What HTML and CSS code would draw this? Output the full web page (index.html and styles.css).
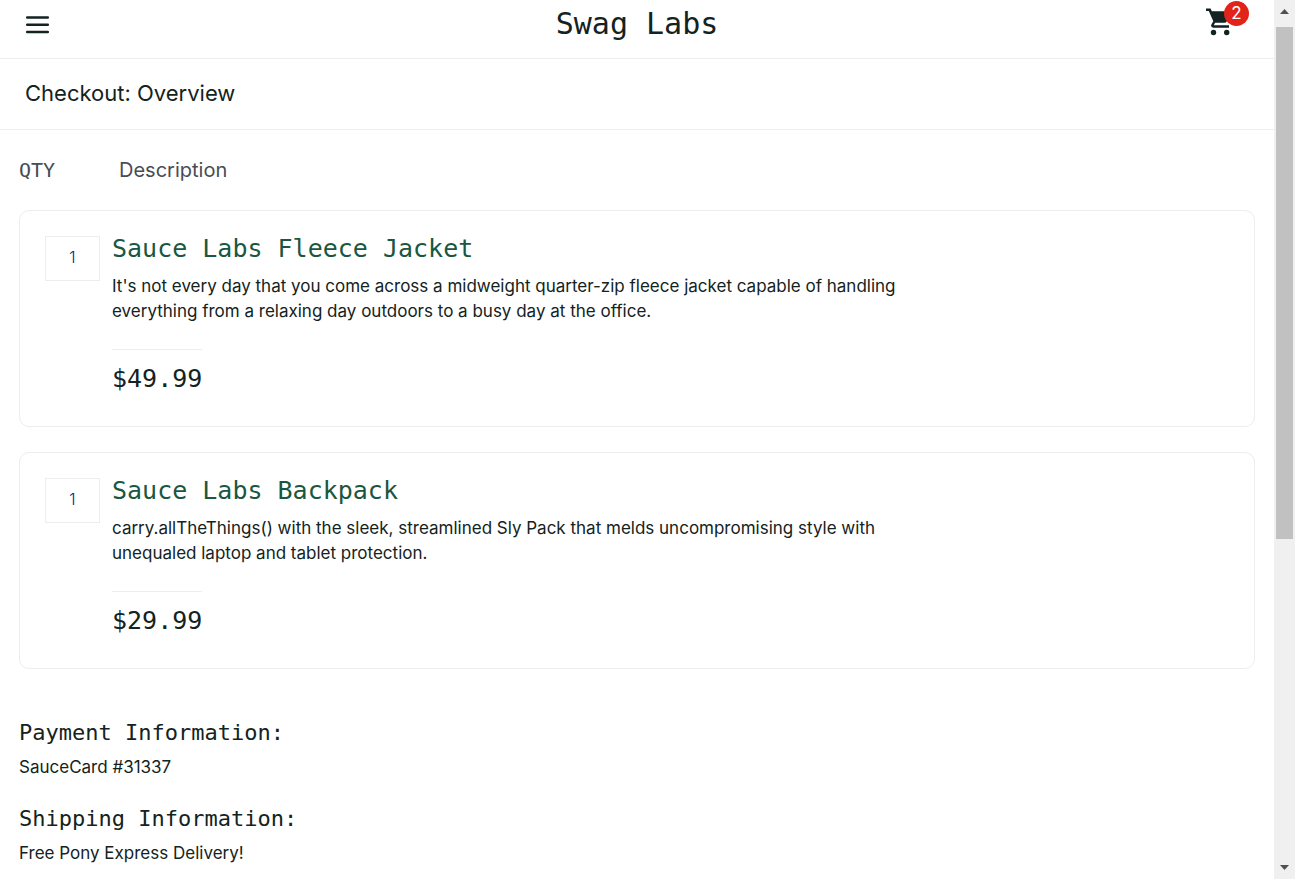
FILE: index.html
```html
<!DOCTYPE html>
<html lang="en">
<head>
<meta charset="utf-8">
<meta name="viewport" content="width=device-width, initial-scale=1">
<title>Swag Labs</title>
<link rel="stylesheet" href="styles.css">
</head>
<body>
<div class="page">
  <header class="topbar">
    <button class="menu-button" type="button" aria-label="Open Menu">
      <svg viewBox="0 0 25 18" width="25" height="18" aria-hidden="true"><path d="M2.200 1.500h20.600M2.200 8.700h20.600M2.200 16h20.600"/></svg>
    </button>
    <div class="logo">Swag Labs</div>
    <a class="cart" href="#cart" aria-label="Cart, 2 items">
      <svg viewBox="0 0 26 28" width="26" height="28" aria-hidden="true"><path d="M0 .5h4.600l1.200 2.800H24.500q1.200.3.700 1.600L20.700 13.500q-.7 1.300-2.200 1.300H9.100L7.800 17.300H23v2.500H7.300q-3-.7-1.900-3.300L7.300 13.200 2.800 3H0z"/><circle cx="7.500" cy="24.500" r="2.700"/><circle cx="20.700" cy="24.500" r="2.700"/></svg>
      <span class="cart-badge">2</span>
    </a>
  </header>
  <div class="subheader"><h1 class="title">Checkout: Overview</h1></div>
  <main class="content">
    <div class="labels"><span class="label-qty">QTY</span><span class="label-desc">Description</span></div>
    <section class="items">
      <article class="item">
        <div class="qty">1</div>
        <div class="details">
          <a class="item-name" href="#fleece-jacket">Sauce Labs Fleece Jacket</a>
          <p class="item-desc">It's not every day that you come across a midweight quarter-zip fleece jacket capable of handling everything from a relaxing day outdoors to a busy day at the office.</p>
          <div class="price">$49.99</div>
        </div>
      </article>
      <article class="item">
        <div class="qty">1</div>
        <div class="details">
          <a class="item-name" href="#backpack">Sauce Labs Backpack</a>
          <p class="item-desc">carry.allTheThings() with the sleek, streamlined Sly Pack that melds uncompromising style with unequaled laptop and tablet protection.</p>
          <div class="price">$29.99</div>
        </div>
      </article>
    </section>
    <section class="summary">
      <h2 class="info-label">Payment Information:</h2>
      <p class="info-value">SauceCard #31337</p>
      <h2 class="info-label">Shipping Information:</h2>
      <p class="info-value">Free Pony Express Delivery!</p>
    </section>
  </main>
</div>
<div class="scrollbar" aria-hidden="true">
  <svg class="arrow" viewBox="0 0 9 5" width="9" height="5"><path d="M0 5 4.500 0 9 5z"/></svg>
  <div class="track"><div class="thumb"></div></div>
  <svg class="arrow" viewBox="0 0 9 5" width="9" height="5"><path d="M0 0h9L4.500 5z"/></svg>
</div>
</body>
</html>
```
FILE: styles.css
```css
* { box-sizing: border-box; }

body {
  margin: 0;
  height: 100vh;
  display: flex;
  overflow: hidden;
  background: #fff;
  color: #132322;
  font: 400 17px/25px Inter, "Liberation Sans", sans-serif;
}

h1, h2, p { margin: 0; }
a { color: inherit; text-decoration: none; }

.page { flex: 1; min-width: 0; overflow: hidden; }

.topbar {
  display: grid;
  grid-template-columns: 1fr auto 1fr;
  align-items: start;
  padding: 0 25px 10px;
  border-bottom: 1px solid #ededed;
}
.menu-button {
  justify-self: start;
  display: flex;
  margin-top: 16px;
  padding: 0;
  border: 0;
  background: none;
  cursor: pointer;
}
.menu-button path { fill: none; stroke: #132322; stroke-width: 2.5; stroke-linecap: round; }
.logo { font: 400 30px/48px "DejaVu Sans Mono", "Liberation Mono", monospace; }
.cart {
  position: relative;
  justify-self: end;
  display: flex;
  margin-top: 8px;
  padding-right: 17px;
}
.cart path, .cart circle { fill: #132322; }
.cart-badge {
  position: absolute;
  top: -7px;
  right: 0;
  width: 25px;
  height: 25px;
  border-radius: 50%;
  background: #e2231a;
  color: #fff;
  text-align: center;
}

.subheader { padding: 19px 25px 21px; border-bottom: 1px solid #ededed; }
.title { font-size: 22px; line-height: 30px; font-weight: 400; }

.content { padding: 27px 19px; }
.labels { display: flex; color: #484c55; font-size: 20px; line-height: 26px; }
.label-qty { width: 100px; font-family: "DejaVu Sans Mono", "Liberation Mono", monospace; }

.items { display: grid; gap: 25px; margin-top: 27px; }
.item {
  display: flex;
  gap: 12px;
  padding: 25px;
  border: 1px solid #ededed;
  border-radius: 10px;
}
.qty {
  flex: none;
  width: 55px;
  height: 45px;
  padding-top: 8px;
  border: 1px solid #ededed;
  color: #18187c;
  font-size: 16px;
  font-weight: 300;
  text-align: center;
}
.details { flex: 1; }
.item-name {
  color: #1b5740;
  font: 400 25px/26px "DejaVu Sans Mono", "Liberation Mono", monospace;
}
.item-desc { width: 72%; margin-top: 10px; }
.price {
  width: fit-content;
  margin-top: 25px;
  padding: 14px 0 7px;
  border-top: 1px solid #ededed;
  font: 400 25px/30px "DejaVu Sans Mono", "Liberation Mono", monospace;
}

.summary { margin-top: 50px; }
.info-label { font: 400 22px/28px "DejaVu Sans Mono", "Liberation Mono", monospace; }
.info-value { margin: 8px 0 25px; }

.scrollbar {
  flex: none;
  width: 21px;
  display: flex;
  flex-direction: column;
  align-items: center;
  gap: 13px;
  padding: 9px 2px;
  background: #f0f0f0;
}
.arrow { flex: none; fill: #505050; }
.track { flex: 1; width: 100%; }
.thumb { height: 62%; background: #c1c1c1; }
```
